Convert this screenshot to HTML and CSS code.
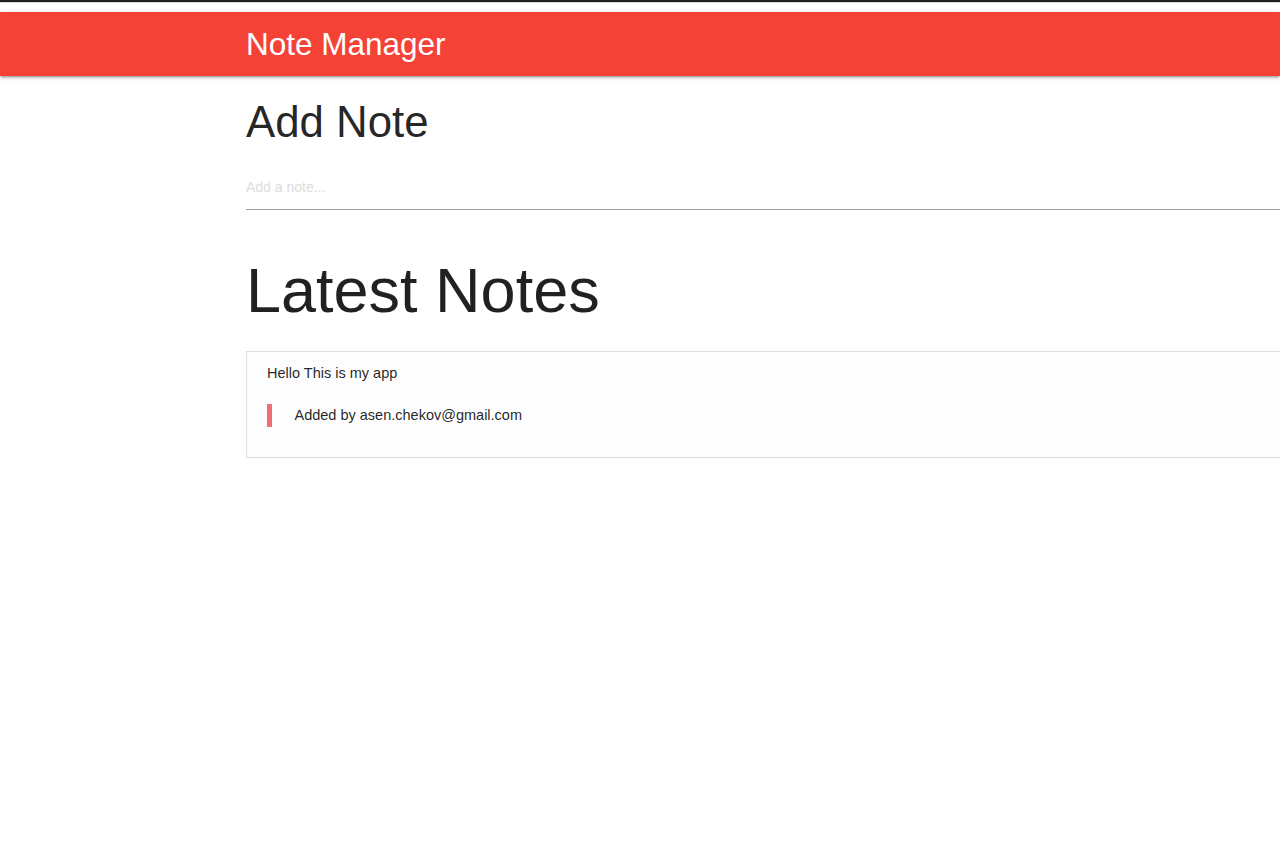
FILE: index.html
```html
<!DOCTYPE html>
<html>
<head>
<meta charset="utf-8">
<link rel="stylesheet" href="styles.css">
</head>
<body>
<div class="topline"></div>
<nav class="navbar">
  <div class="wrap"><span class="brand">Note Manager</span></div>
</nav>
<main class="wrap">
  <h3 class="h-add">Add Note</h3>
  <form class="note-form">
    <input class="note-input" type="text" placeholder="Add a note...">
  </form>
  <h1 class="h-latest">Latest Notes</h1>
  <div class="card">
    <p class="note-text">Hello This is my app</p>
    <blockquote class="note-meta">Added by asen.chekov@gmail.com</blockquote>
  </div>
</main>
</body>
</html>
```

FILE: styles.css
```css
html { font-size: 15px; }
body {
  margin: 0;
  font-family: "Liberation Sans", Arial, sans-serif;
  color: rgba(0,0,0,0.87);
  line-height: 1.5;
  overflow-x: hidden;
  background: #fff;
}
.topline {
  height: 2px;
  background: #1e1e1e;
  border-bottom: 1px solid #d8d8d8;
  margin-bottom: 9px;
}
.navbar {
  height: 64px;
  background: #f44336;
  box-shadow: 0 2px 2px 0 rgba(0,0,0,0.14), 0 3px 1px -2px rgba(0,0,0,0.12), 0 1px 5px 0 rgba(0,0,0,0.2);
}
.wrap {
  margin-left: 246px;
  width: 1100px;
}
.brand {
  display: block;
  color: #fff;
  font-size: 31.5px;
  line-height: 64px;
}
.h-add {
  font-size: 43.8px;
  font-weight: 400;
  line-height: 110%;
  margin: 21.9px 0 17.5px;
}
.note-form { margin: 0; padding-bottom: 15px; }
.note-input {
  display: block;
  box-sizing: content-box;
  width: 100%;
  height: 43px;
  padding: 2px 0 0;
  margin: 0;
  border: none;
  border-bottom: 1px solid #9e9e9e;
  outline: none;
  font-family: inherit;
  font-size: 14px;
  background: transparent;
  color: rgba(0,0,0,0.87);
}
.note-input::placeholder { color: #dcdcdc; }
.h-latest {
  font-size: 63px;
  font-weight: 400;
  line-height: 110%;
  margin: 31.5px 0 25.2px;
}
.card {
  border: 1px solid #ddd;
  background: #fdfdfd;
  padding: 10px 20px;
}
.note-text {
  margin: 0;
  font-size: 14.5px;
  line-height: 22.5px;
}
.note-meta {
  margin: 20px 0;
  padding-left: 22.5px;
  border-left: 5px solid #ee6e73;
  font-size: 14.5px;
  line-height: 22.5px;
}
```
